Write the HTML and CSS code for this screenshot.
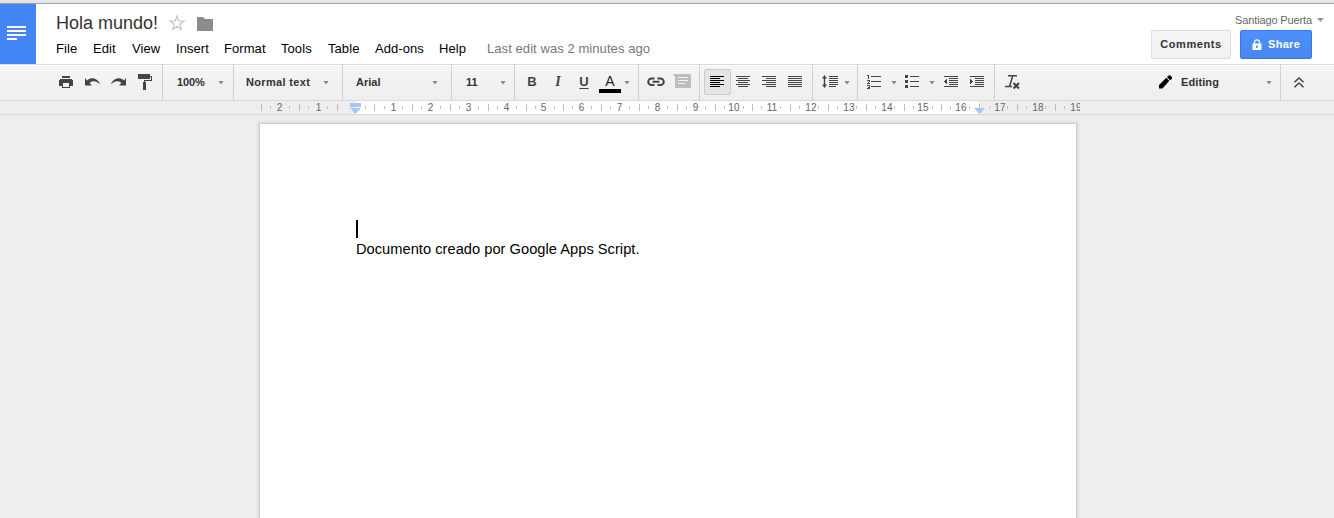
FILE: index.html
```html
<!DOCTYPE html>
<html lang="en">
<head>
<meta charset="utf-8">
<title>Hola mundo!</title>
<link rel="stylesheet" href="styles.css">
</head>
<body>
<div class="chrome-edge"></div>
<header class="header">
  <div class="logo">
    <svg width="36" height="60" shape-rendering="crispEdges"><path fill="#fff" d="M7 22h19v2H7zM7 26h19v2H7zM7 30h19v2H7zM7 34h10v2H7z"/></svg>
  </div>
  <div class="doc-info">
    <div class="title-row">
      <h1 class="title">Hola mundo!</h1>
      <svg class="star" width="18" height="18" viewBox="0 0 18 18"><path fill="none" stroke="#c6c6c6" stroke-width="1.2" d="M9 2l1.700 5H16l-4.300 3.200 1.600 5.300L9 12.300l-4.300 3.200 1.600-5.300L2 7h5.300z"/></svg>
      <svg class="folder" width="16" height="14"><path fill="#8c8c8c" d="M0 0h6l2 2h8v12H0z"/></svg>
    </div>
    <nav class="menu">
      <span>File</span><span>Edit</span><span>View</span><span>Insert</span><span>Format</span><span>Tools</span><span>Table</span><span>Add-ons</span><span>Help</span><span class="last-edit">Last edit was 2 minutes ago</span>
    </nav>
  </div>
  <div class="account">
    <div class="user"><span>Santiago Puerta</span><svg width="7" height="4"><path fill="#999" d="M0 0h7L3.500 4z"/></svg></div>
    <div class="actions">
      <button class="btn comments">Comments</button>
      <button class="btn share"><svg width="10" height="12"><path fill="none" stroke="#fff" stroke-width="1.300" d="M2.500 5V3.300a2.500 2.500 0 0 1 5 0V5"/><path fill="#fff" fill-rule="evenodd" d="M.500 4.500h9V11h-9zM5 6.500a1.200 1.200 0 1 0 .01 0z"/></svg><span>Share</span></button>
    </div>
  </div>
</header>

<div class="toolbar">
  <div class="group g-file">
    <svg class="tool" viewBox="0 0 26 35" shape-rendering="crispEdges"><path fill="#444" d="M9 11h8v2H9zM7 14h12v1h1v6h-3v-3H9v3H6v-6h1z"/><path fill="none" stroke="#444" d="M9.500 17.500h7v5h-7z"/></svg>
    <svg class="tool" viewBox="0 0 26 35"><path id="undo" fill="#444" d="M6 13v7.500h7l-2.400-2.400c2.500-2.700 7-2.600 10.400 1.400-1.600-6-8.700-8.300-13-4z"/></svg>
    <svg class="tool" viewBox="0 0 26 35"><use href="#undo" transform="translate(27 0) scale(-1 1)"/></svg>
    <svg class="tool" viewBox="0 0 26 35" shape-rendering="crispEdges"><path fill="#444" d="M7 9h12v5H7zM12 17h3v8h-3z"/><path fill="none" stroke="#444" d="M19 11.500h1.500v4h-7V17"/></svg>
  </div>
  <div class="group g-zoom"><span class="label">100%</span><i class="arrow"></i></div>
  <div class="group g-style"><span class="label">Normal text</span><i class="arrow"></i></div>
  <div class="group g-font"><span class="label">Arial</span><i class="arrow"></i></div>
  <div class="group g-size"><span class="label">11</span><i class="arrow"></i></div>
  <div class="group g-text">
    <span class="tool letter bold">B</span><span class="tool letter italic">I</span><span class="tool letter underline">U</span>
    <span class="tool letter color">A</span><i class="arrow"></i>
  </div>
  <div class="group g-insert">
    <svg class="tool" viewBox="0 0 26 35"><path fill="none" stroke="#444" stroke-width="2" d="M11.500 13.500H8.500a3.200 3.200 0 0 0 0 6.500h3M14.500 13.500h3a3.200 3.200 0 0 1 0 6.500h-3M9.500 16.800h7"/></svg>
    <svg class="tool" viewBox="0 0 26 35"><path fill="#bdbdbd" d="M4 9h18v14H6V12z"/><path fill="#f3f3f3" d="M9 12h10v1H9zM9 15h10v1H9zM9 18h7v1H9z"/></svg>
  </div>
  <div class="group g-align">
    <span class="tool pressed"><svg width="25" height="24" shape-rendering="crispEdges"><path fill="#000" d="M5 6h14v1H5zM5 8h10v1H5zM5 10h14v1H5zM5 12h10v1H5zM5 14h14v1H5zM5 16h10v1H5z"/></svg></span>
    <svg class="tool" viewBox="0 0 26 35" shape-rendering="crispEdges"><path fill="#444" d="M5 11h14v1H5zM7 13h10v1H7zM5 15h14v1H5zM7 17h10v1H7zM5 19h14v1H5zM7 21h10v1H7z"/></svg>
    <svg class="tool" viewBox="0 0 26 35" shape-rendering="crispEdges"><path fill="#444" d="M5 11h14v1H5zM9 13h10v1H9zM5 15h14v1H5zM9 17h10v1H9zM5 19h14v1H5zM9 21h10v1H9z"/></svg>
    <svg class="tool" viewBox="0 0 26 35" shape-rendering="crispEdges"><path fill="#444" d="M5 11h14v1H5zM5 13h14v1H5zM5 15h14v1H5zM5 17h14v1H5zM5 19h14v1H5zM5 21h14v1H5z"/></svg>
  </div>
  <div class="group g-spacing">
    <svg class="tool" viewBox="0 0 26 35"><path fill="#444" d="M6 13.500L8.500 10l2.500 3.500H9.200v6H11L8.500 23 6 19.500h1.800v-6z"/><path shape-rendering="crispEdges" fill="#444" d="M13 11h9v1h-9zM13 13h9v1h-9zM13 15h9v1h-9zM13 17h9v1h-9zM13 19h9v1h-9zM13 21h7v1h-7z"/></svg><i class="arrow"></i>
  </div>
  <div class="group g-lists">
    <svg class="tool" viewBox="0 0 26 35" shape-rendering="crispEdges"><path fill="#444" d="M9 11h10v1H9zM9 16h10v1H9zM9 21h10v1H9z"/><path fill="none" stroke="#444" d="M5 10.500h1.500V14M5 15.500h2.500v1L5.500 18.500H8M5 20.500h2.500v3H5M6 22h2"/></svg><i class="arrow"></i>
    <svg class="tool bullets" viewBox="0 0 26 35" shape-rendering="crispEdges"><path fill="#444" d="M10 11h9v1h-9zM10 16h9v1h-9zM10 21h9v1h-9zM5 10h3v3H5zM5 15h3v3H5zM5 20h3v3H5z"/></svg><i class="arrow"></i>
    <svg class="tool outdent" viewBox="0 0 26 35" shape-rendering="crispEdges"><path fill="#444" d="M5 11h14v1H5zM10 13h9v1h-9zM10 15h9v1h-9zM10 17h9v1h-9zM10 19h9v1h-9zM5 21h14v1H5zM5 16.500L8 14v5z"/></svg>
    <svg class="tool" viewBox="0 0 26 35" shape-rendering="crispEdges"><path fill="#444" d="M5 11h14v1H5zM10 13h9v1h-9zM10 15h9v1h-9zM10 17h9v1h-9zM10 19h9v1h-9zM5 21h14v1H5zM8 16.500L5 14v5z"/></svg>
  </div>
  <div class="group g-clear">
    <svg class="tool" viewBox="0 0 26 35"><path fill="none" stroke="#444" stroke-width="1.500" d="M8 10.700h9M12.700 11L9.700 21M5 21.500h7"/><path stroke="#444" stroke-width="2" d="M13.500 18l5.500 5.500M19 18l-5.500 5.500"/></svg>
  </div>
  <div class="group g-mode">
    <svg class="pencil" width="14" height="14"><path fill="#000" d="M1 13.500v-3.500L8.300 2.700l3 3L4.500 13.500zM9 2L10.500.600h1.800L14 2.300v1.500l-2 1.500z"/></svg>
    <span class="label">Editing</span><i class="arrow"></i>
  </div>
  <svg class="collapse" width="12" height="12"><path fill="none" stroke="#444" stroke-width="1.500" d="M1.500 5.300L6 1l4.500 4.300M1.500 10.300L6 6l4.500 4.300"/></svg>
</div>

<svg class="ruler" width="1080" height="13" viewBox="0 101 1080 13">
  <path fill="#fff" d="M356 101h623v13H356z"/>
  <path stroke="#bdbdbd" transform="translate(.5 104)" d="M261 0v7M299 0v7M337 0v7M374 0v7M412 0v7M450 0v7M488 0v7M526 0v7M563 0v7M601 0v7M639 0v7M677 0v7M715 0v7M752 0v7M790 0v7M828 0v7M866 0v7M904 0v7M941 0v7M979 0v7M1017 0v7M1055 0v7"/>
  <path stroke="#c2c2c2" transform="translate(.5 106)" d="M270 0v3M289 0v3M308 0v3M327 0v3M365 0v3M384 0v3M402 0v3M421 0v3M440 0v3M459 0v3M478 0v3M497 0v3M516 0v3M535 0v3M554 0v3M572 0v3M591 0v3M610 0v3M629 0v3M648 0v3M667 0v3M686 0v3M705 0v3M724 0v3M743 0v3M761 0v3M780 0v3M799 0v3M818 0v3M837 0v3M856 0v3M875 0v3M894 0v3M913 0v3M932 0v3M950 0v3M969 0v3M989 0v3M1007 0v3M1026 0v3M1045 0v3M1064 0v3"/>
  <g class="ruler-numbers">
    <text x="279.500" y="111">2</text><text x="318.500" y="111">1</text>
    <text x="393.500" y="111">1</text><text x="430.500" y="111">2</text><text x="468.500" y="111">3</text><text x="506.500" y="111">4</text><text x="543.500" y="111">5</text><text x="581.500" y="111">6</text><text x="619.500" y="111">7</text><text x="657.500" y="111">8</text><text x="695.500" y="111">9</text><text x="734" y="111">10</text><text x="772" y="111">11</text><text x="811" y="111">12</text><text x="849" y="111">13</text><text x="887" y="111">14</text><text x="923" y="111">15</text><text x="961" y="111">16</text><text x="1000" y="111">17</text><text x="1038" y="111">18</text><text x="1076" y="111">19</text>
  </g>
  <path fill="#a4c6fb" d="M350 103h11v4h-11zM350 108h11l-5.500 6zM974 108h11l-5.500 6z"/>
</svg>

<main class="canvas">
  <article class="page">
    <div class="caret"></div>
    <p class="paragraph">Documento creado por Google Apps Script.</p>
  </article>
</main>
</body>
</html>
```
FILE: styles.css
```css
* { box-sizing: border-box; }

body {
  margin: 0;
  height: 518px;
  overflow: hidden;
  display: flex;
  flex-direction: column;
  background: #eee;
  font-family: "Liberation Sans", Arial, sans-serif;
  color: #000;
}

svg { display: block; flex: none; }

.chrome-edge { height: 4px; flex: none; background: #e4e4e4; border-bottom: 1px solid #a3a3a3; }

.header { display: flex; height: 60px; flex: none; background: #fff; }
.logo { width: 36px; background: #4285f4; }
.doc-info { padding: 8px 0 0 20px; flex: 1; }

.title-row { display: flex; height: 22px; }
.title { margin: 0; width: 112px; font-size: 18px; font-weight: 400; line-height: 22px; color: #333; white-space: nowrap; }
.star { margin-top: 2px; }
.folder { margin: 5px 0 0 11px; }

.menu {
  display: grid;
  grid-template-columns: 37px 39px 44px 48px 57px 47px 47px 64px 48px auto;
  margin-top: 7px;
  font-size: 13px;
  line-height: 15px;
  letter-spacing: 0.070px;
  white-space: nowrap;
}
.last-edit { color: #777; }

.account { width: 184px; padding-top: 9px; }
.user { display: flex; align-items: center; justify-content: flex-end; gap: 5px; padding-right: 10px; height: 14px; font-size: 11px; letter-spacing: -0.130px; color: #666; }
.actions { display: flex; gap: 9px; margin-top: 3px; padding-left: 1px; }

.btn {
  height: 29px;
  padding: 0;
  border: 1px solid #dcdcdc;
  border-radius: 2px;
  background: linear-gradient(#f5f5f5, #f1f1f1);
  font: bold 11px/27px "Liberation Sans", Arial, sans-serif;
  color: #333;
}
.comments { width: 80px; letter-spacing: 0.600px; }
.share { display: flex; align-items: center; width: 72px; padding-left: 11px; gap: 6px; border-color: #3079ed; background: linear-gradient(#4d90fe, #4787ed); color: #fff; letter-spacing: 0.300px; }

.toolbar {
  display: flex;
  height: 37px;
  flex: none;
  border: solid #d9d9d9;
  border-width: 1px 0;
  background: linear-gradient(#fff 1px, #f5f5f5 1px, #eee);
}
.group { display: flex; align-items: center; flex: none; border-right: 1px solid #cfcfcf; }
.tool { width: 26px; height: 35px; flex: none; }
.label { flex: 1; padding-bottom: 2px; font-size: 11px; font-weight: bold; color: #333; white-space: nowrap; }
.arrow { flex: none; width: 6px; height: 4px; background: #888; clip-path: polygon(0 0, 100% 0, 50% 100%); }

.g-file { width: 163px; padding-left: 53px; }
.g-zoom { width: 71px; padding: 0 9px 0 14px; }
.g-zoom .label { letter-spacing: -0.100px; }
.g-style { width: 109px; padding: 0 13px 0 12px; }
.g-style .label { letter-spacing: 0.330px; }
.g-font { width: 109px; padding: 0 13px; }
.g-size { width: 63px; padding: 0 8px 0 14px; }
.g-text { width: 124px; padding-left: 4px; }
.g-insert { width: 61px; padding-left: 4px; }
.g-align { width: 113px; padding-left: 5px; }
.g-spacing { width: 45px; padding-left: 3px; }
.g-spacing .arrow { margin-left: 2px; }
.g-lists { width: 137px; padding-left: 4px; }
.g-lists .arrow { margin-left: 3px; }
.bullets { margin-left: 3px; }
.outdent { margin-left: 4px; }
.g-clear { width: 26px; border: 0; padding-left: 5px; }
.g-mode { width: 123px; margin-left: auto; padding-right: 8px; }
.g-mode .label { padding-left: 9px; letter-spacing: 0.100px; }
.pencil { margin-bottom: 2px; }
.collapse { margin: 12px 29px 0 12px; }

.letter { display: flex; justify-content: center; padding-top: 9px; font-size: 13px; line-height: 15px; color: #444; }
.bold { font-weight: bold; }
.italic { font: italic bold 14px/15px "Liberation Serif", serif; }
.underline { font-weight: bold; text-decoration: underline; text-decoration-thickness: 1px; text-underline-offset: 2px; }
.color { align-self: flex-start; width: 22px; height: 19px; margin: 9px 3px 0 2px; padding-top: 0; border-bottom: 4px solid #000; font-size: 14px; line-height: 14px; color: #222; }

.pressed { width: 27px; height: 26px; margin: 0 0 1px -1px; border: 1px solid #ccc; border-radius: 2px; background: #e5e5e5; }

.ruler-numbers { font-size: 10px; letter-spacing: 0.100px; fill: #666; text-anchor: middle; }

.canvas { display: flex; flex: 1; min-height: 0; padding: 8px 0 0 259px; border-top: 1px solid #d9d9d9; }
.page { width: 818px; padding: 96px 96px 0; border: 1px solid #ccc; border-bottom: 0; background: #fff; box-shadow: 0 0 3px 1px rgba(0, 0, 0, 0.100); }
.caret { width: 2px; height: 18px; background: #000; }
.paragraph { margin: 3px 0 0; font-size: 14.670px; line-height: 17px; letter-spacing: 0.020px; color: #000; white-space: nowrap; }
```
